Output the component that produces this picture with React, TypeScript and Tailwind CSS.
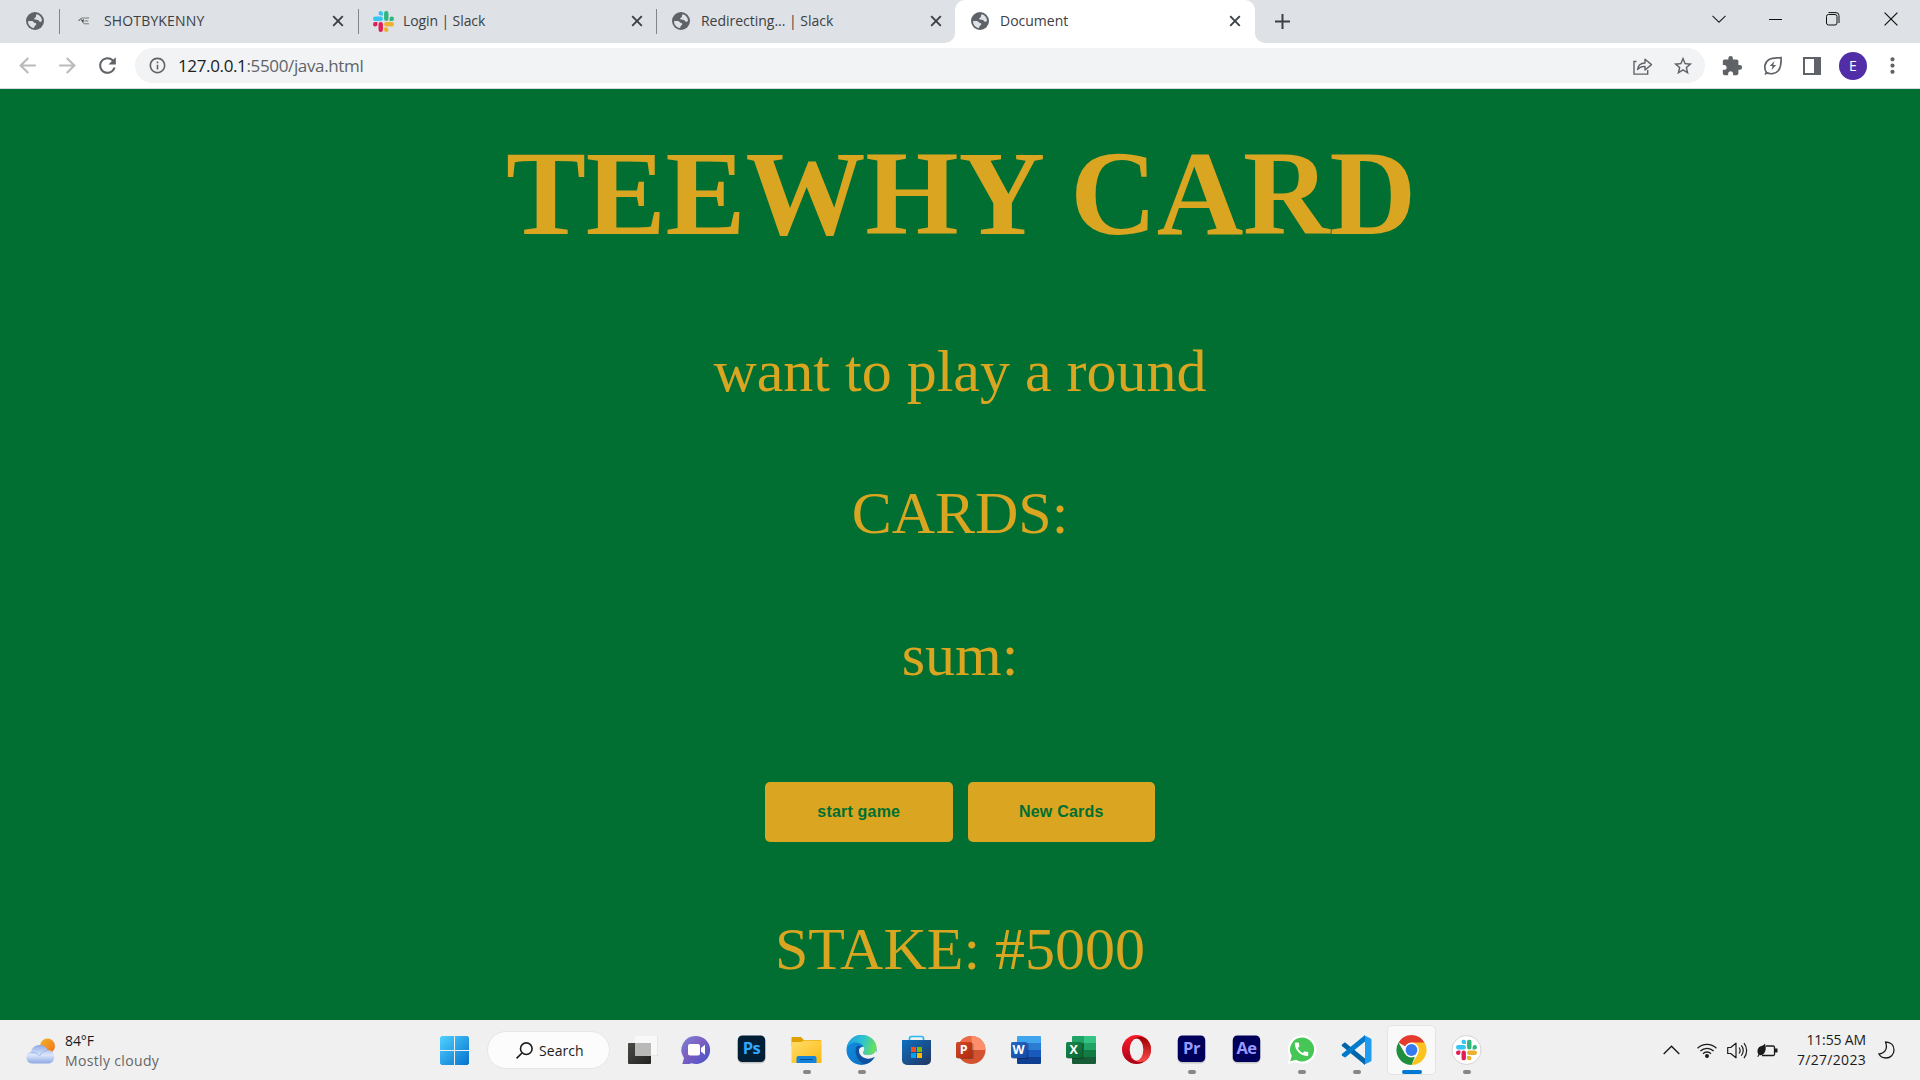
import React from "react";
import {
  MdArrowBack,
  MdArrowForward,
  MdRefresh,
  MdInfoOutline,
  MdStarBorder,
  MdExtension,
  MdMoreVert,
  MdCall,
} from "react-icons/md";

const ui = "font-['Open_Sans','Noto_Sans',sans-serif]";

function Globe() {
  return (
    <svg width="18" height="18" viewBox="0 0 18 18" className="shrink-0">
      <circle cx="9" cy="9" r="9" fill="#5f6368" />
      <path
        d="M2 9.3c1.3-.6 3.6-.5 4.800 0 .9.4.8 1.300 1.700 1.500 1.200.2 2 .7 1.700 1.800-.3 1-1.500 1-1.700 2-.1.700-.300 1.200-.800 1.400C4.500 15.500 2 12.800 2 9.300z"
        fill="#dee1e6"
      />
      <path
        d="M10.800 2.200c2.800.7 5 3.200 5.200 6-.3 1.200-1.200 1.800-2.200 1.500-1-.3-1-1.500-2-1.700-1.500-.3-3.300.1-3.600-1-.2-1 1-1.300 1.600-2 .5-.8-.1-2.100 1-2.800z"
        fill="#dee1e6"
      />
    </svg>
  );
}

function SlackMark({ size }: { size: number }) {
  const petal =
    "M5.042 15.165a2.528 2.528 0 0 1-2.52 2.523A2.528 2.528 0 0 1 0 15.165a2.527 2.527 0 0 1 2.522-2.52h2.52v2.52zM6.313 15.165a2.527 2.527 0 0 1 2.521-2.52 2.527 2.527 0 0 1 2.521 2.52v6.313A2.528 2.528 0 0 1 8.834 24a2.528 2.528 0 0 1-2.521-2.522v-6.313z";
  return (
    <svg width={size} height={size} viewBox="0 0 24 24" className="shrink-0">
      <path d={petal} fill="#e01e5a" />
      <path d={petal} fill="#36c5f0" transform="rotate(90 12 12)" />
      <path d={petal} fill="#2eb67d" transform="rotate(180 12 12)" />
      <path d={petal} fill="#ecb22e" transform="rotate(270 12 12)" />
    </svg>
  );
}

function TabClose() {
  return (
    <svg width="12" height="12" viewBox="0 0 12 12" className="shrink-0">
      <path d="M1.200 1.200l9.600 9.600M10.800 1.200L1.200 10.800" stroke="#3c4043" strokeWidth="1.900" />
    </svg>
  );
}

function TabStrip() {
  return (
    <div className="flex h-[43px] bg-[#dee1e6] text-[14px] leading-[20px] text-[#3c4043]">
      <div className="flex h-[42px] w-[60px] items-center pl-[26px]">
        <Globe />
        <div className="ml-[15px] h-[25px] w-px bg-[#80868b]" />
      </div>
      <div className="flex h-[42px] w-[299px] items-center">
        <svg width="12" height="8" viewBox="0 0 12 8" className="ml-[18px] shrink-0">
          <path d="M11 1H6.500C3.500.5 1 2 .8 4c.8-1.400 2-1.800 3-1.400M6 2.400c-2 .6-2.400 3.400.8 4.400H11M6.500 4h3.800" stroke="#777" strokeWidth="1" fill="none" />
          <path d="M3 3.500l2.500-1v3z" fill="#333" />
        </svg>
        <span className="ml-[14px] flex-1 tracking-[0.15px]">SHOTBYKENNY</span>
        <TabClose />
        <div className="ml-[14px] h-[25px] w-px bg-[#80868b]" />
      </div>
      <div className="flex h-[42px] w-[298px] items-center">
        <div className="ml-[14px] flex"><SlackMark size={21} /></div>
        <span className="ml-[9px] flex-1 tracking-[-0.1px]">Login | Slack</span>
        <TabClose />
        <div className="ml-[13px] h-[25px] w-px bg-[#80868b]" />
      </div>
      <div className="flex h-[43px] w-[298px] items-center rounded-br-[10px] bg-[#dee1e6] pb-px">
        <div className="ml-[15px] flex"><Globe /></div>
        <span className="ml-[11px] flex-1 tracking-[-0.02px]">Redirecting... | Slack</span>
        <div className="mr-[13px] flex"><TabClose /></div>
      </div>
      <div className="relative flex h-[43px] w-[300px] items-center rounded-t-[10px] bg-white pb-px">
        <svg width="10" height="10" viewBox="0 0 10 10" className="absolute -left-[10px] bottom-0">
          <path d="M10 0v10H0A10 10 0 0 0 10 0z" fill="#fff" />
        </svg>
        <svg width="10" height="10" viewBox="0 0 10 10" className="absolute -right-[10px] bottom-0">
          <path d="M0 0v10h10A10 10 0 0 1 0 0z" fill="#fff" />
        </svg>
        <div className="ml-[16px] flex"><Globe /></div>
        <span className="ml-[11px] flex-1">Document</span>
        <div className="mr-[14px] flex"><TabClose /></div>
      </div>
      <div className="flex h-[42px] items-center pl-[20px]">
        <svg width="15" height="15" viewBox="0 0 15 15">
          <path d="M7.500 0v15M0 7.500h15" stroke="#3c4043" strokeWidth="2" />
        </svg>
      </div>
      <div className="ml-auto flex h-[37px] items-center pr-[22px]">
        <svg width="14" height="8" viewBox="0 0 14 8" className="mr-[43px]">
          <path d="M.5.8L7 7.200 13.500.8" stroke="#222" strokeWidth="1.100" fill="none" />
        </svg>
        <svg width="14" height="14" viewBox="0 0 14 14" className="mr-[43px]">
          <path d="M0 7.500h13" stroke="#111" strokeWidth="1" />
        </svg>
        <svg width="14" height="14" viewBox="0 0 14 14" className="mr-[44px]">
          <rect x=".5" y="2.500" width="10.500" height="10.500" rx="2" stroke="#111" fill="none" />
          <path d="M2.500.6H10a3 3 0 0 1 3 3v7.400" stroke="#111" fill="none" />
        </svg>
        <svg width="14" height="14" viewBox="0 0 14 14">
          <path d="M.6.6l12.800 12.800M13.400.6L.6 13.400" stroke="#111" strokeWidth="1.200" />
        </svg>
      </div>
    </div>
  );
}

function Toolbar() {
  return (
    <div className="flex h-[46px] items-center border-b border-[#d5d8dc] bg-white text-[#5f6368]">
      <MdArrowBack size={25} className="ml-[15px] text-[#b8babc]" />
      <MdArrowForward size={25} className="ml-[15px] text-[#b8babc]" />
      <MdRefresh size={25} className="ml-[15px]" />
      <div className="ml-[15px] flex h-[35px] w-[1570px] items-center rounded-full bg-[#f1f3f4]">
        <MdInfoOutline size={19} className="ml-[13px]" />
        <span className="ml-[11px] flex-1 text-[17px] leading-[22px] tracking-[-0.36px]">
          <span className="text-[#202124]">127.0.0.1</span>:5500/java.html
        </span>
        <svg width="20" height="18" viewBox="0 0 20 18" className="mr-[19px]" fill="none" stroke="#5f6368" strokeWidth="1.400">
          <path d="M3.500 4.500H1v12.600h13.700V13" />
          <path d="M4.500 12.500c.5-4 3-6.300 7.500-6.500V2.200l6.500 5.400L12 13V9.400c-3.500-.1-5.700 1-7.500 3.100z" strokeLinejoin="round" />
        </svg>
        <MdStarBorder size={22} className="mr-[11px]" />
      </div>
      <MdExtension size={22} className="ml-[16px]" />
      <svg width="20" height="20" viewBox="0 0 20 20" className="ml-[20px]" fill="none" stroke="#5f6368" strokeWidth="1.700">
        <path d="M2 18.500l1.500-2C.5 12 1.500 6 6.500 3.300 10 1.700 14 2.200 18 1.600c.3 4 .3 9-2.500 12.900-3 3.700-8.500 4-12 2" />
        <path d="M11.500 5l-4.800 5h2.800l-1 4 4.700-5h-2.900z" fill="#5f6368" stroke="none" />
      </svg>
      <svg width="18" height="18" viewBox="0 0 18 18" className="ml-[20px]">
        <path d="M1 1h16v16H1z" fill="none" stroke="#5f6368" strokeWidth="2" />
        <path d="M11 0h7v18h-7z" fill="#5f6368" />
      </svg>
      <div className="ml-[18px] flex size-[28px] items-center justify-center rounded-full bg-[#512da8] text-[14px] text-white">
        E
      </div>
      <MdMoreVert size={25} className="ml-[13px]" />
    </div>
  );
}

function GamePage() {
  const row = "text-[60px] leading-[142px]";
  return (
    <main className="flex h-[931px] flex-col items-center bg-[#016f32] font-['Liberation_Serif',serif] text-[#daa520]">
      <h1 className="mt-[36px] mb-[37px] pl-[2px] text-[120px] leading-[138px] font-bold tracking-[-0.2px]">TEEWHY CARD</h1>
      <p className={row}>want to play a round</p>
      <p className={row}>CARDS:</p>
      <p className={row}>sum:</p>
      <div className="mt-[56px] mb-[36px] flex gap-[15px] font-['Liberation_Sans',sans-serif] text-[16px] font-bold tracking-[0.2px] text-[#016f32]">
        <button className="h-[60px] w-[187.5px] rounded-[5px] bg-[#daa520]">start game</button>
        <button className="h-[60px] w-[187.5px] rounded-[5px] bg-[#daa520]">New Cards</button>
      </div>
      <p className={row}>STAKE: #5000</p>
    </main>
  );
}

function TaskbarCell({ children, run, active }: { children: React.ReactNode; run?: boolean; active?: boolean }) {
  return (
    <div className="relative h-[60px] w-[55px] shrink-0">
      {active && <div className="absolute top-[5px] left-[3px] h-[50px] w-[49px] rounded-[5px] border border-[#e4e4e4] bg-[#f9f9f9]" />}
      <svg width="55" height="60" viewBox="0 0 55 60" className="absolute inset-0">
        {children}
      </svg>
      {run && <div className="absolute top-[50px] left-[24px] h-[4px] w-[8px] rounded-full bg-[#868686]" />}
      {active && <div className="absolute top-[50px] left-[18px] h-[4px] w-[20px] rounded-full bg-[#0078d4]" />}
    </div>
  );
}

function AdobeIcon({ label, bg, fg }: { label: string; bg: string; fg: string }) {
  return (
    <>
      <rect x="13.500" y="16.500" width="28" height="27" rx="5" fill="#999" opacity=".5" />
      <rect x="13.800" y="15.500" width="27.400" height="26.500" rx="4.500" fill={bg} />
      <text x="27.500" y="34" textAnchor="middle" fontSize="16.500" fontWeight="700" fontFamily="Open Sans" fill={fg} letterSpacing="-.5">
        {label}
      </text>
    </>
  );
}

function OfficeTile({ letter, from, to }: { letter: string; from: string; to: string }) {
  const id = "tile" + letter;
  return (
    <>
      <defs>
        <linearGradient id={id} x1="0" y1="0" x2="1" y2="1">
          <stop offset="0" stopColor={from} />
          <stop offset="1" stopColor={to} />
        </linearGradient>
      </defs>
      <rect x="13" y="23" width="16.500" height="16" rx="1.500" fill="#000" opacity=".25" />
      <rect x="12" y="22" width="16" height="16" rx="1.500" fill={`url(#${id})`} />
      <text x="19.600" y="34.200" textAnchor="middle" fontSize="12.500" fontWeight="700" fontFamily="Open Sans" fill="#fff">
        {letter}
      </text>
    </>
  );
}

function Taskbar() {
  return (
    <footer className="flex h-[60px] bg-[#f0f0f0] text-[14px] text-[#1b1b1b]">
      <div className="flex w-[427px] items-center pl-[26px]">
        <svg width="30" height="26" viewBox="0 0 30 26" className="mt-[2px]">
          <defs>
            <linearGradient id="sun" x1="0" y1="0" x2="1" y2="1">
              <stop offset="0" stopColor="#f0b429" />
              <stop offset="1" stopColor="#f6701c" />
            </linearGradient>
            <linearGradient id="cloud" x1="0" y1="0" x2="0" y2="1">
              <stop offset="0" stopColor="#8fa9e6" />
              <stop offset=".55" stopColor="#dbe6fb" />
              <stop offset="1" stopColor="#8ea7e4" />
            </linearGradient>
          </defs>
          <circle cx="21.500" cy="8" r="7.500" fill="url(#sun)" />
          <path d="M6 25.500a6 6 0 0 1-1-11.800 8.800 8.800 0 0 1 16.500-1.800 7 7 0 0 1 2 13.600z" fill="url(#cloud)" />
          <path d="M5 14.500c4-.8 7 1.500 8.500 3.500 1.500-3 4.500-5.300 8-5.700" fill="none" stroke="#8fa8e0" strokeWidth="1" opacity=".7" />
        </svg>
        <div className="ml-[9px] pt-px leading-[20px]">
          <div className="tracking-[-0.1px]">84°F</div>
          <div className="tracking-[0.35px] text-[#666]">Mostly cloudy</div>
        </div>
      </div>
      <TaskbarCell>
        <defs>
          <linearGradient id="win" x1="0" y1="0" x2="1" y2="1">
            <stop offset="0" stopColor="#4fd3ff" />
            <stop offset="1" stopColor="#0670cf" />
          </linearGradient>
        </defs>
        <path d="M14.500 16H27v14H13V17.500zM28 16h12.500l1.500 1.500V30H28zM13 31h14v14H14.500L13 43.500zM28 31h14v12.500L40.500 45H28z" fill="url(#win)" />
      </TaskbarCell>
      <div className="mr-[4px] ml-[5px] my-[11px] flex w-[123px] items-center rounded-full border border-[#e6e6e6] bg-[#fcfcfc] pl-[28px]">
        <svg width="17" height="17" viewBox="0 0 17 17" fill="none" stroke="#1b1b1b" strokeWidth="1.600">
          <circle cx="10.300" cy="6.700" r="5.800" />
          <path d="M6 11L.6 16.400" />
        </svg>
        <span className="ml-[6px] tracking-[0.05px]">Search</span>
      </div>
      <TaskbarCell>
        <defs>
          <linearGradient id="tvd" x1="0" y1="0" x2="1" y2="1">
            <stop offset="0" stopColor="#4a4a46" />
            <stop offset="1" stopColor="#222" />
          </linearGradient>
        </defs>
        <rect x="14" y="23" width="23" height="21" rx="1" fill="url(#tvd)" />
        <rect x="21" y="16" width="23" height="20" rx="1" fill="#ccc" opacity=".7" />
        <rect x="21" y="16" width="22.500" height="19.500" rx="1" fill="#f8f8f8" />
        <rect x="21" y="23" width="16" height="13" fill="#b9b9b7" />
      </TaskbarCell>
      <TaskbarCell>
        <defs>
          <linearGradient id="chat" x1="0" y1="0" x2="1" y2="1">
            <stop offset="0" stopColor="#7b84d8" />
            <stop offset=".45" stopColor="#7c5fc0" />
            <stop offset="1" stopColor="#4452cc" />
          </linearGradient>
        </defs>
        <path d="M27.500 16a14 14 0 1 1-5 27.200c-2 .9-5 .8-9.200.8l1.700-6A14 14 0 0 1 27.500 16z" fill="url(#chat)" />
        <rect x="19" y="24" width="12" height="11.500" rx="2" fill="#fff" />
        <path d="M32 28l4-3.200v10L32 31.600z" fill="#fff" />
      </TaskbarCell>
      <TaskbarCell><AdobeIcon label="Ps" bg="#001e36" fg="#31a8ff" /></TaskbarCell>
      <TaskbarCell run>
        <defs>
          <linearGradient id="fold" x1="0" y1="0" x2="1" y2="1">
            <stop offset="0" stopColor="#ffdd6b" />
            <stop offset="1" stopColor="#fdb913" />
          </linearGradient>
        </defs>
        <path d="M13 17h9l3 3h17v6H12.500v-8.500z" fill="#e0a000" />
        <path d="M12.500 22H22l3-1.500h17.500V43h-30z" fill="url(#fold)" />
        <path d="M17.500 43v-5a2 2 0 0 1 2-2h16a2 2 0 0 1 2 2v5z" fill="#1583d8" />
        <path d="M21 39.500h13" stroke="#0b4f96" />
      </TaskbarCell>
      <TaskbarCell run>
        <defs>
          <linearGradient id="eTop" x1="0" y1=".4" x2="1" y2=".6">
            <stop offset="0" stopColor="#1e9fe0" />
            <stop offset=".5" stopColor="#2fc3d0" />
            <stop offset="1" stopColor="#6fe34c" />
          </linearGradient>
          <linearGradient id="eLow" x1="0" y1="0" x2="1" y2="1">
            <stop offset="0" stopColor="#1292e6" />
            <stop offset="1" stopColor="#0a66b8" />
          </linearGradient>
        </defs>
        <circle cx="27.500" cy="30" r="15" fill="url(#eLow)" />
        <path d="M12.600 29C13.400 21 19.500 15 27.500 15c9 0 15 6 15 12.500 0 4.500-3.500 7.500-8 7.500-3.500 0-5.500-1-5.500-2.300 0-1 1.300-1.700 1.300-3.700 0-3.500-4-6.500-8.500-6.500-4.300 0-8 2.500-9.200 6.500z" fill="url(#eTop)" />
        <path d="M22.500 26.500c-3 7 2 15.500 8 17.800 4.500-1 8-3.500 10-7.500-7 4-15.500.5-15.500-5.800 0-2.200 1-3.500 2.300-4.500-1.800-1-3.800-1-4.800 0z" fill="#10529f" />
        <path d="M25 30c-.5 6.500 8 11 15 7.300.8-.5 1.300-.3.900.7l2-3.500-.9-4c-1.500 3-4.500 4.500-8 4.500-3.200 0-5-1-5-2.300 0-1 1.300-1.700 1.300-3.700 0-.8-.2-1.500-.6-2.200-2.700.2-4.500 1.500-4.700 3.200z" fill="#f0f0f0" />
      </TaskbarCell>
      <TaskbarCell>
        <defs>
          <linearGradient id="store" x1="0" y1="0" x2="1" y2="1">
            <stop offset="0" stopColor="#0d6fc2" />
            <stop offset="1" stopColor="#23365f" />
          </linearGradient>
        </defs>
        <path d="M20.500 21v-2.500a2 2 0 0 1 2-2h10a2 2 0 0 1 2 2V21" fill="none" stroke="#26b8f0" strokeWidth="1.700" />
        <path d="M13 20h29v20a5 5 0 0 1-5 5H18a5 5 0 0 1-5-5z" fill="url(#store)" />
        <path d="M22 27h5v5h-5z" fill="#f25022" />
        <path d="M28 27h5v5h-5z" fill="#7fba00" />
        <path d="M22 33h5v5h-5z" fill="#00a4ef" />
        <path d="M28 33h5v5h-5z" fill="#ffb900" />
      </TaskbarCell>
      <TaskbarCell>
        <circle cx="27.500" cy="30" r="14" fill="#d35230" />
        <path d="M27.500 16a14 14 0 0 0-14 14h14z" fill="#ed6c47" />
        <path d="M27.500 16a14 14 0 0 1 14 14h-14z" fill="#ff8f6b" />
        <OfficeTile letter="P" from="#cf4a26" to="#b3290f" />
      </TaskbarCell>
      <TaskbarCell>
        <path d="M19 16h22a1 1 0 0 1 1 1v6H18v-6a1 1 0 0 1 1-1z" fill="#41a5ee" />
        <path d="M18 23h24v7H18z" fill="#2b7cd3" />
        <path d="M18 30h24v7H18z" fill="#185abd" />
        <path d="M18 37h24v6a1 1 0 0 1-1 1H19a1 1 0 0 1-1-1z" fill="#103f91" />
        <OfficeTile letter="W" from="#2368c4" to="#1549a8" />
      </TaskbarCell>
      <TaskbarCell>
        <path d="M19 16h11v7H18v-6a1 1 0 0 1 1-1z" fill="#21a366" />
        <path d="M30 16h11a1 1 0 0 1 1 1v6H30z" fill="#33c481" />
        <path d="M18 23h12v7H18z" fill="#107c41" />
        <path d="M30 23h12v7H30z" fill="#21a366" />
        <path d="M18 30h24v7H18z" fill="#107c41" />
        <path d="M18 37h24v6a1 1 0 0 1-1 1H19a1 1 0 0 1-1-1z" fill="#185c37" />
        <OfficeTile letter="X" from="#18884f" to="#0b6631" />
      </TaskbarCell>
      <TaskbarCell>
        <defs>
          <linearGradient id="opA" x1="0" y1="0" x2="0" y2="1">
            <stop offset="0" stopColor="#ff1b2d" />
            <stop offset="1" stopColor="#a70014" />
          </linearGradient>
          <linearGradient id="opB" x1="0" y1="0" x2="0" y2="1">
            <stop offset="0" stopColor="#9c0000" />
            <stop offset="1" stopColor="#ff4b4b" />
          </linearGradient>
        </defs>
        <circle cx="27.500" cy="29.500" r="14.500" fill="url(#opA)" />
        <path d="M22.500 20.500C27 16.500 33 16 37.300 18.800a14.500 14.500 0 0 1 0 21.500C33 43 27 42.500 22.500 38.500z" fill="url(#opB)" />
        <ellipse cx="27.500" cy="29.500" rx="6.800" ry="11" fill="#f0f0f0" />
      </TaskbarCell>
      <TaskbarCell run><AdobeIcon label="Pr" bg="#00005b" fg="#9999ff" /></TaskbarCell>
      <TaskbarCell><AdobeIcon label="Ae" bg="#00005b" fg="#9999ff" /></TaskbarCell>
      <TaskbarCell run>
        <path d="M28 15.300a14.200 14.200 0 1 1-6.500 26.700l-8 2 2.200-7.500A14.200 14.200 0 0 1 28 15.300z" fill="#fff" />
        <path d="M28 17.500a12 12 0 1 1-6 22.300l-5.800 1.500 1.600-5.600A12 12 0 0 1 28 17.500z" fill="#45c655" />
        <g transform="translate(18.500 20.300)"><MdCall size={18} color="#fff" /></g>
      </TaskbarCell>
      <TaskbarCell run>
        <path d="M13 24.500l2-1.600c.7-.5 1.300-.4 1.800 0L36 38.500V45L13.200 26.200c-.6-.6-.6-1.200-.2-1.700z" fill="#0065a9" />
        <path d="M13 35.500l2 1.600c.7.5 1.300.4 1.800 0L36 21.500V15L13.200 33.800c-.6.6-.6 1.200-.2 1.700z" fill="#007acc" />
        <path d="M35 15.200l6.300 3c.8.400 1.200 1 1.200 1.800v20c0 .8-.4 1.400-1.200 1.800l-6.300 3c1-.6 1-1.300 1-2.300v-25c0-1 0-1.700-1-2.300z" fill="#1f9cf0" />
      </TaskbarCell>
      <TaskbarCell active>
        <path d="M27.500 30L14.500 22.500A15 15 0 0 1 40.500 22.500z" fill="#e33b2e" />
        <path d="M27.500 30V22.500h13A15 15 0 0 1 27.500 45L34 33.700z" fill="#fcc31e" />
        <path d="M14.500 22.500L21 33.700 27.500 37l3.500-.5L27.500 45A15 15 0 0 1 14.500 22.500z" fill="#1f8e3e" />
        <circle cx="27.500" cy="30" r="7.400" fill="#fff" />
        <circle cx="27.500" cy="30" r="5.900" fill="#357af0" />
      </TaskbarCell>
      <TaskbarCell run>
        <circle cx="27.500" cy="30" r="14.500" fill="#fff" stroke="#d4d4d4" />
        <g transform="translate(17 19.500)"><SlackMark size={21} /></g>
      </TaskbarCell>
      <div className="ml-auto flex items-center pr-[25px]">
        <svg width="17" height="10" viewBox="0 0 17 10" className="mr-[17px]">
          <path d="M.7 9L8.500 1.200 16.300 9" fill="none" stroke="#1b1b1b" strokeWidth="1.400" />
        </svg>
        <svg width="20" height="15" viewBox="0 0 20 15" className="mr-[10px]" fill="none" stroke="#1b1b1b" strokeWidth="1.300">
          <path d="M.6 5.200a13.400 13.400 0 0 1 18.800 0M3.400 8a9.400 9.400 0 0 1 13.200 0M6 10.700a5.600 5.600 0 0 1 8 0" />
          <circle cx="10" cy="13" r="1.300" fill="#1b1b1b" />
        </svg>
        <svg width="21" height="17" viewBox="0 0 21 17" className="mr-[9px]" fill="none" stroke="#1b1b1b" strokeWidth="1.200">
          <path d="M.7 5.500h3L9 1.200v14.600l-5.300-4.300h-3z" strokeLinejoin="round" />
          <path d="M12 5.500a5 5 0 0 1 0 6M14.300 3.300a8 8 0 0 1 0 10.400M17 1a12 12 0 0 1 0 15" />
        </svg>
        <svg width="21" height="15" viewBox="0 0 21 15" className="mr-[19px]">
          <path d="M9 3h7a1.500 1.500 0 0 1 1.500 1.500v6A1.500 1.500 0 0 1 16 12.500H5" fill="none" stroke="#1b1b1b" strokeWidth="1.300" />
          <path d="M18 5.500h2.500v4H18zM7.800.5C9.500 4 9 9 6 11.500c-1 .8-2.500 1-3.500.5l-1.500 2-.8-.5 1.300-2C0 9 0 5.500 3 3.500 5 2.500 7 2.500 7.800.5z" fill="#1b1b1b" />
        </svg>
        <div className="text-right leading-[20px]">
          <div className="tracking-[-0.15px]">11:55 AM</div>
          <div className="tracking-[0.3px]">7/27/2023</div>
        </div>
        <svg width="17" height="18" viewBox="0 0 17 18" className="ml-[12px]">
          <path d="M7.500 1C13 1 16 4.500 16 9s-3.500 8-8 8c-3.500 0-6-1.800-7.200-4.200C5.500 13 10.500 9 7.500 1z" fill="none" stroke="#1b1b1b" strokeWidth="1.300" strokeLinejoin="round" />
        </svg>
      </div>
    </footer>
  );
}

export default function App() {
  return (
    <div className={`${ui} h-[1080px] w-[1920px] overflow-hidden`}>
      <TabStrip />
      <Toolbar />
      <GamePage />
      <Taskbar />
    </div>
  );
}
